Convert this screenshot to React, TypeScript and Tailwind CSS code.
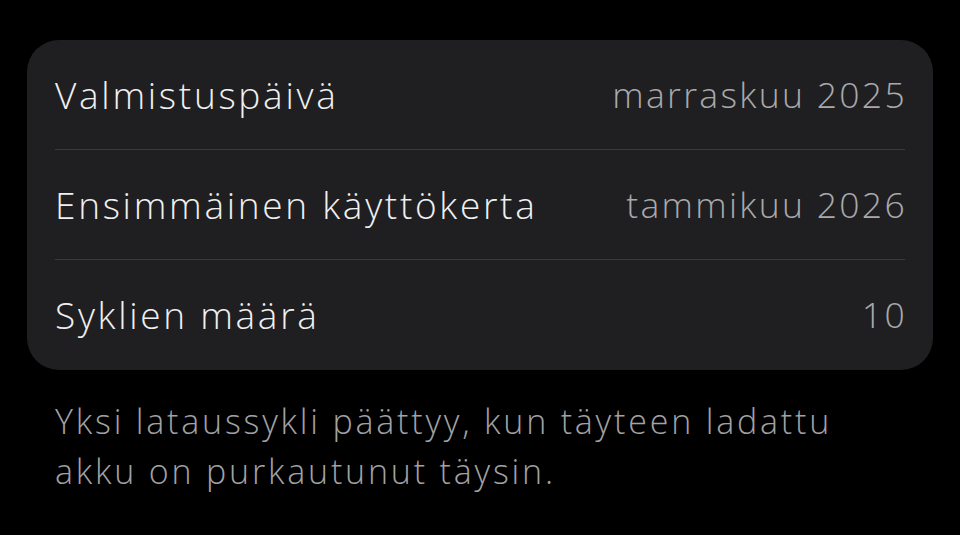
const rows = [
  { label: "Valmistuspäivä", value: "marraskuu 2025" },
  { label: "Ensimmäinen käyttökerta", value: "tammikuu 2026" },
  { label: "Syklien määrä", value: "10" },
];

export default function App() {
  return (
    <div
      className="h-[535px] w-[960px] overflow-hidden bg-black pt-[40px]"
      style={{ fontFamily: '"Open Sans", "Noto Sans", sans-serif' }}
    >
      <div className="mx-[27px] rounded-[32px] bg-[#1f1f21] px-[28px]">
        {rows.map((r, i) => (
          <div
            key={r.label}
            className={[
              "flex h-[110px] items-center justify-between",
              i < rows.length - 1 ? "border-b border-[#3a3a3c]" : "",
            ].join(" ")}
          >
            <span className="text-[37px] font-light tracking-[2.7px] text-[#f0f0f0]">{r.label}</span>
            <span className="-mr-[2px] text-[35.5px] font-light tracking-[2.3px] text-[#a9a9ab]">{r.value}</span>
          </div>
        ))}
      </div>
      <p className="mt-[26px] px-[55px] text-[34px] font-light leading-[50px] tracking-[2.8px] text-[#a2a2a4]">
        Yksi lataussykli päättyy, kun täyteen ladattu
        <br />
        akku on purkautunut täysin.
      </p>
    </div>
  );
}
